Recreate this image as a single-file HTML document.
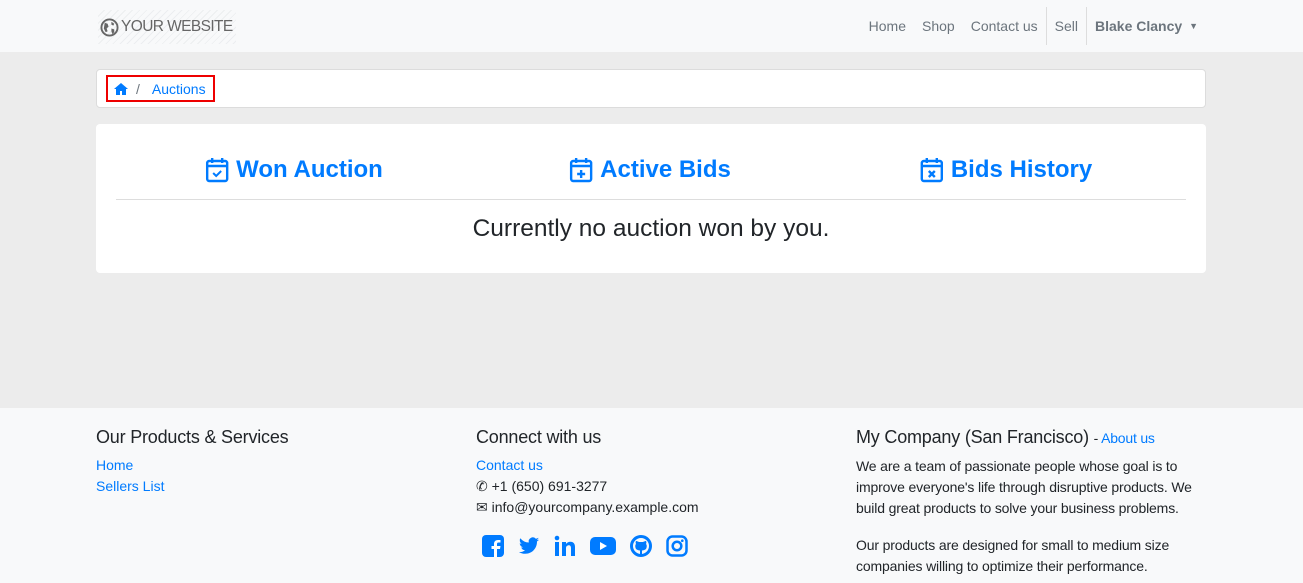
<!DOCTYPE html>
<html><head><meta charset="utf-8"><style>
*{box-sizing:border-box;margin:0;padding:0}
body{width:1303px;height:583px;overflow:hidden;font-family:"Liberation Sans",sans-serif;background:#ececec;color:#212529;font-size:14px}
a{color:#007bff;text-decoration:none}
.nav{height:52px;background:#f8f9fa;position:relative}
.logo{position:absolute;left:98px;top:10px;width:138px;height:34px;background:repeating-linear-gradient(135deg,#f8f9fa 0 4px,#eceef0 4px 5px);display:flex;align-items:center;color:#666;font-size:15.5px;letter-spacing:-.6px;white-space:nowrap}
.menu{position:absolute;right:0;top:0;height:52px;display:flex;align-items:center;font-size:14px;color:#6c757d}
.menu span{padding:0 8px}
.sep{border-left:1px solid #ddd;height:38px}
.bc{position:absolute;left:96px;top:69px;width:1110px;height:39px;background:#fff;border:1px solid #dcdcdc;border-radius:4px}
.red{position:absolute;left:9px;top:5px;width:109px;height:27px;border:2px solid #e00;display:flex;align-items:center;padding-left:6px;font-size:14px}
.card{position:absolute;left:96px;top:124px;width:1110px;height:149px;background:#fff;border-radius:4px}
.h{position:absolute;top:32px;font-size:24px;font-weight:bold;color:#007bff;display:flex;align-items:center;gap:7px;transform:translateX(-50%);white-space:nowrap}
.hr{position:absolute;left:20px;right:20px;top:75px;border-top:1px solid #ddd}
.msg{position:absolute;top:91px;width:100%;text-align:center;font-size:24.5px}
.foot{position:absolute;top:408px;left:0;width:1303px;height:175px;background:#f8f9fa}
.col{position:absolute;top:18px;line-height:21px}
.col h4{font-size:18px;font-weight:normal;margin-bottom:7px;line-height:22px;letter-spacing:-.2px}
.soc{display:flex;gap:14px;margin-top:17px;margin-left:6px}
</style></head><body>
<div class="nav">
<div class="logo"><svg width="19" height="19" viewBox="0 0 20 20" style="margin:0 2px 0 2px;flex:none"><circle cx="10" cy="10" r="8.5" fill="none" stroke="#666" stroke-width="2"/><path d="M5 5l3 1 1 3-2 2 1 3-2 1-2-4zM12 4l3 2-1 2-2-1zM12 11l3 1 0 3-2 2-1-3z" fill="#666"/></svg>YOUR WEBSITE</div>
<div class="menu"><span>Home</span><span>Shop</span><span style="padding-right:8px">Contact us</span><div class="sep"></div><span>Sell</span><div class="sep"></div><span style="font-weight:bold;padding-right:105px">Blake Clancy <span style="font-size:9px;padding:0 0 0 3px;vertical-align:2px">&#9660;</span></span></div>
</div>
<div class="bc"><div class="red"><svg width="14" height="12" viewBox="0 0 14 12"><path d="M7 0L0 6h2v6h4V8h2v4h4V6h2z" fill="#007bff"/></svg><span style="color:#6c757d;margin:0 12px 0 8px">/</span><a>Auctions</a></div></div>
<div class="card">
<div class="h" style="left:198px"><svg width="24" height="26" viewBox="0 0 24 26"><rect x="2" y="4" width="20" height="20" rx="2" fill="none" stroke="#007bff" stroke-width="2.4"/><path d="M2 9h20M7 1v5M17 1v5" stroke="#007bff" stroke-width="2.4"/><path d="M8 16l3 3 5-5" fill="none" stroke="#007bff" stroke-width="2"/></svg>Won Auction</div>
<div class="h" style="left:554px"><svg width="24" height="26" viewBox="0 0 24 26"><rect x="2" y="4" width="20" height="20" rx="2" fill="none" stroke="#007bff" stroke-width="2.4"/><path d="M2 9h20M7 1v5M17 1v5M12 13v8M8 17h8" stroke="#007bff" stroke-width="2.4"/></svg>Active Bids</div>
<div class="h" style="left:910px"><svg width="24" height="26" viewBox="0 0 24 26"><rect x="2" y="4" width="20" height="20" rx="2" fill="none" stroke="#007bff" stroke-width="2.4"/><path d="M2 9h20M7 1v5M17 1v5M9 14l6 6M15 14l-6 6" stroke="#007bff" stroke-width="2.4"/></svg>Bids History</div>
<div class="hr"></div>
<div class="msg">Currently no auction won by you.</div>
</div>
<div class="foot">
<div class="col" style="left:96px"><h4>Our Products &amp; Services</h4><a>Home</a><br><a>Sellers List</a></div>
<div class="col" style="left:476px"><h4>Connect with us</h4><a>Contact us</a><br>&#9990; +1 (650) 691-3277<br>&#9993; info@yourcompany.example.com
<div class="soc">
<svg width="22" height="22" viewBox="0 0 22 22"><rect width="22" height="22" rx="4" fill="#007bff"/><path d="M15 22v-8h3l.5-3H15V9c0-1 .5-1.5 1.5-1.5H18.5V5H16c-3 0-4 2-4 4v2H9.5v3H12v8z" fill="#fff"/></svg>
<svg width="22" height="22" viewBox="0 0 24 24"><path d="M23 5a9 9 0 01-2.6.7A4.5 4.5 0 0022.4 3a9 9 0 01-2.9 1.1 4.5 4.5 0 00-7.7 4.1A12.8 12.8 0 012.5 3.5a4.5 4.5 0 001.4 6A4.5 4.5 0 011.9 9a4.5 4.5 0 003.6 4.4 4.5 4.5 0 01-2 .1 4.5 4.5 0 004.2 3.1A9 9 0 011 18.5 12.8 12.8 0 007.9 20.5c8.3 0 12.8-6.9 12.8-12.8v-.6A9 9 0 0023 5z" fill="#007bff"/></svg>
<svg width="22" height="22" viewBox="0 0 22 22"><rect x="1" y="7" width="4" height="14" fill="#007bff"/><circle cx="3" cy="3" r="2.3" fill="#007bff"/><path d="M8 7h4v2c1-1.5 2.5-2.3 4.5-2.3 3 0 4.5 2 4.5 5.5V21h-4v-8c0-1.8-.7-2.8-2.2-2.8S12 11.3 12 13v8H8z" fill="#007bff"/></svg>
<svg width="26" height="22" viewBox="0 0 26 22"><rect x="0" y="2" width="26" height="18" rx="5" fill="#007bff"/><path d="M10 7l7 4-7 4z" fill="#fff"/></svg>
<svg width="22" height="22" viewBox="0 0 22 22"><circle cx="11" cy="11" r="9.5" fill="none" stroke="#007bff" stroke-width="3"/><path d="M6 6c1 0 3 1 3 1h4s2-1 3-1c.5 1 .5 2 0 3 1 1 1 3 0 5-1 1-3 1.5-4 1.5v5h-2v-5c-1 0-3-.5-4-1.5-1-2-1-4 0-5-.5-1-.5-2 0-3z" fill="#007bff"/></svg>
<svg width="22" height="22" viewBox="0 0 22 22"><rect x="1.5" y="1.5" width="19" height="19" rx="5" fill="none" stroke="#007bff" stroke-width="2.5"/><circle cx="11" cy="11" r="4.3" fill="none" stroke="#007bff" stroke-width="2.5"/><circle cx="16.3" cy="5.7" r="1.3" fill="#007bff"/></svg>
</div></div>
<div class="col" style="left:856px;width:350px;letter-spacing:-.15px"><h4>My Company (San Francisco) <span style="font-size:14px">- <a>About us</a></span></h4>We are a team of passionate people whose goal is to improve everyone's life through disruptive products. We build great products to solve your business problems.<p style="margin-top:16px">Our products are designed for small to medium size companies willing to optimize their performance.</p></div>
</div>
</body></html>
